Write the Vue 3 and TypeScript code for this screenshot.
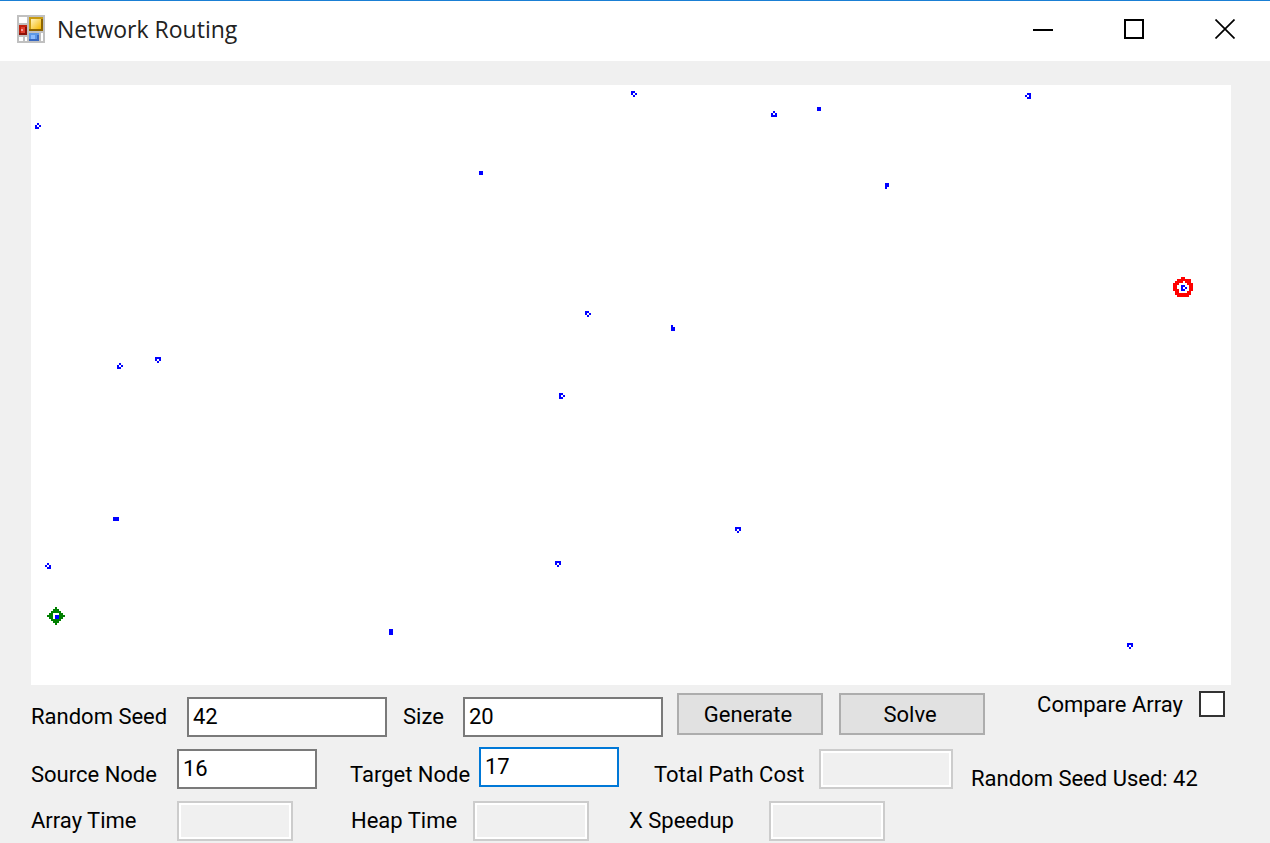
<script setup lang="ts">
import { ref } from 'vue'

interface MapNode {
  x: number
  y: number
  cells: string[]
}

const seed = ref('42')
const size = ref('20')
const source = ref('16')
const target = ref('17')
const compare = ref(false)

const OPEN_E = ['##.', '#.#', '##.']
const OPEN_SE = ['##.', '#.#', '.#.']
const OPEN_S = ['###', '#.#', '.#.']
const OPEN_N = ['.#.', '#.#', '###']
const OPEN_NE = ['.#.', '#.#', '##.']
const OPEN_W = ['.##', '#.#', '.##']
const OPEN_SW = ['.#.', '#.#', '.##']
const DOT = ['##', '##']

// Node positions and cell patterns on the 600 x 300 map grid.
const nodes: MapNode[] = [
  { x: 2, y: 19, cells: OPEN_NE },
  { x: 300, y: 3, cells: OPEN_SE },
  { x: 370, y: 13, cells: OPEN_N },
  { x: 393, y: 11, cells: DOT },
  { x: 497, y: 4, cells: OPEN_W },
  { x: 224, y: 43, cells: DOT },
  { x: 427, y: 49, cells: ['##', '##', '#.'] },
  { x: 575, y: 100, cells: OPEN_E },
  { x: 277, y: 113, cells: OPEN_SE },
  { x: 320, y: 120, cells: ['#.', '##', '##'] },
  { x: 43, y: 139, cells: OPEN_NE },
  { x: 62, y: 136, cells: OPEN_S },
  { x: 264, y: 154, cells: OPEN_E },
  { x: 41, y: 216, cells: ['###', '###'] },
  { x: 352, y: 221, cells: OPEN_S },
  { x: 7, y: 239, cells: OPEN_SW },
  { x: 262, y: 238, cells: OPEN_S },
  { x: 12, y: 265, cells: DOT },
  { x: 179, y: 272, cells: ['##', '##', '##'] },
  { x: 548, y: 279, cells: OPEN_S },
]

const TARGET_RING = [
  '....##....',
  '..#######.',
  '.####.###.',
  '###....###',
  '##......##',
  '##......##',
  '###.....##',
  '.##....##.',
  '.########.',
  '..######..',
]

const SOURCE_RING = [
  '....#....',
  '...###...',
  '..#####..',
  '.##...##.',
  '###...###',
  '.##...##.',
  '..#####..',
  '...###...',
  '....#....',
]

function toPath(cells: string[], x: number, y: number): string {
  return cells
    .flatMap((row, r) =>
      [...row].map((c, i) => (c === '#' ? `M${x + i} ${y + r}h1v1h-1z` : '')),
    )
    .join('')
}
</script>

<template>
  <main class="window">
    <header class="titlebar">
      <svg class="app-icon" viewBox="0 0 28 28" shape-rendering="crispEdges" aria-hidden="true">
        <defs>
          <linearGradient id="gold" x1="0" y1="0" x2="1" y2="1">
            <stop offset="0" stop-color="#fff3c0" />
            <stop offset="1" stop-color="#f5b800" />
          </linearGradient>
        </defs>
        <rect width="28" height="28" fill="#c0c0c0" />
        <path fill="#fff" d="M2 2h8v6H2zM2 22h4v4H2zM8 22h2v4H8zM24 18h2v8h-2z" />
        <rect x="12" y="2" width="14" height="14" fill="#c89a10" />
        <path d="M12 14h14v2H12zM24 4h2v12h-2z" fill="#8e6500" />
        <rect x="14" y="4" width="10" height="10" fill="url(#gold)" />
        <rect x="2" y="10" width="8" height="10" fill="#c0200c" />
        <path d="M2 18h8v2H2zM8 12h2v8H8z" fill="#8c1008" />
        <rect x="4" y="12" width="4" height="6" fill="#e04030" />
        <rect x="4" y="14" width="2" height="2" fill="#f4a0a0" />
        <rect x="12" y="18" width="10" height="8" fill="#5b98e8" />
        <path d="M12 24h10v2H12zM20 20h2v6h-2z" fill="#3868c0" />
        <rect x="14" y="20" width="4" height="4" fill="#8cbcff" />
      </svg>
      <h1>Network Routing</h1>
      <nav class="captions">
        <button type="button" aria-label="Minimize">
          <svg viewBox="0 0 20 20" shape-rendering="crispEdges"><path d="M0 10h20v2H0z" /></svg>
        </button>
        <button type="button" aria-label="Maximize">
          <svg viewBox="0 0 20 20" shape-rendering="crispEdges">
            <path d="M1 1h18v18H1z" fill="none" stroke="#000" stroke-width="2" />
          </svg>
        </button>
        <button type="button" aria-label="Close">
          <svg viewBox="0 0 20 20">
            <path d="M0.5 0.5l19 19M19.5 0.5l-19 19" fill="none" stroke="#000" stroke-width="1.7" />
          </svg>
        </button>
      </nav>
    </header>

    <section class="body">
      <svg class="map" viewBox="0 0 600 300" shape-rendering="crispEdges" role="img" aria-label="Network nodes">
        <path :d="toPath(TARGET_RING, 571, 96)" fill="#f00" />
        <path :d="toPath(SOURCE_RING, 8, 261)" fill="#008000" />
        <path v-for="(n, i) in nodes" :key="i" :d="toPath(n.cells, n.x, n.y)" fill="#00f" />
      </svg>

      <form class="controls" @submit.prevent>
        <div class="row first">
          <label class="l-seed" for="seed">Random Seed</label>
          <input id="seed" v-model="seed" class="field wide" type="text" />
          <label class="l-size" for="size">Size</label>
          <input id="size" v-model="size" class="field wide" type="text" />
          <button class="push gen" type="button">Generate</button>
          <button class="push" type="button">Solve</button>
          <label class="check">Compare Array<input v-model="compare" type="checkbox" /></label>
        </div>
        <div class="row second">
          <label class="l-node" for="source">Source Node</label>
          <input id="source" v-model="source" class="field mid" type="text" />
          <label class="l-target" for="target">Target Node</label>
          <input id="target" v-model="target" class="field mid active" type="text" />
          <label class="l-cost" for="cost">Total Path Cost</label>
          <input id="cost" class="field cost" type="text" disabled />
          <span class="used">Random Seed Used: 42</span>
        </div>
        <div class="row third">
          <label class="l-node" for="array">Array Time</label>
          <input id="array" class="field small" type="text" disabled />
          <label class="l-heap" for="heap">Heap Time</label>
          <input id="heap" class="field small" type="text" disabled />
          <label class="l-speed" for="speed">X Speedup</label>
          <input id="speed" class="field small" type="text" disabled />
        </div>
      </form>
    </section>
  </main>
</template>

<style>
body {
  background: #f0f0f0;
}
</style>

<style scoped>
.window {
  border-top: 1px solid #1a7fd4;
  background: #f0f0f0;
  color: #000;
  font-family: Roboto, "Liberation Sans", sans-serif;
  font-size: 22px;
  line-height: 28px;
  overflow: hidden;
}
* {
  box-sizing: border-box;
}
.titlebar {
  display: flex;
  align-items: center;
  height: 60px;
  padding: 0 0 4px 17px;
  background: #fff;
}
.app-icon {
  width: 28px;
  height: 28px;
  margin-right: 12px;
}
h1 {
  flex: 1;
  margin: 0;
  font-family: "Open Sans", "Noto Sans", sans-serif;
  font-size: 23px;
  line-height: 32px;
  font-weight: 400;
  color: #222;
}
.captions {
  display: flex;
}
.captions button {
  display: grid;
  place-items: center;
  width: 91px;
  height: 56px;
  padding: 0;
  border: 0;
  background: none;
}
.captions svg {
  width: 20px;
  height: 20px;
}
.body {
  padding: 24px 39px 0 31px;
}
.map {
  display: block;
  width: 100%;
  background: #fff;
}
.row {
  display: flex;
  align-items: flex-start;
  white-space: nowrap;
}
.first {
  height: 62px;
  padding-top: 8px;
}
.second {
  height: 52px;
}
.third {
  height: 42px;
}
label,
.used {
  flex: none;
}
.first > label {
  margin-top: 10px;
}
.second > label {
  margin-top: 14px;
}
.third > label {
  margin-top: 8px;
}
.l-seed {
  width: 156px;
}
.l-size {
  width: 60px;
  margin-left: 16px;
}
.l-node {
  width: 146px;
}
.l-target {
  width: 129px;
  margin-left: 33px;
}
.l-cost {
  width: 165px;
  margin-left: 35px;
}
.l-heap {
  width: 122px;
  margin-left: 58px;
}
.l-speed {
  width: 140px;
  margin-left: 40px;
}
.field {
  flex: none;
  height: 40px;
  margin: 0;
  padding: 0 4px 2px;
  border: 2px solid #7a7a7a;
  border-radius: 0;
  outline: 0;
  background: #fff;
  color: #000;
  font: inherit;
}
.first .field {
  margin-top: 4px;
}
.second .field,
.third .field {
  margin-top: 2px;
}
.second .active {
  margin-top: 0;
  border-color: #0078d7;
}
.field:disabled {
  border-color: #ccc;
  background: #f0f0f0;
  box-shadow: inset 0 0 0 2px #fff;
}
.wide {
  width: 200px;
}
.mid {
  width: 140px;
}
.cost {
  width: 134px;
}
.small {
  width: 116px;
}
.push {
  flex: none;
  width: 146px;
  height: 42px;
  margin: 0;
  padding: 2px 4px 0 0;
  border: 2px solid #adadad;
  background: #e1e1e1;
  color: #000;
  font: inherit;
}
.gen {
  margin: 0 16px 0 14px;
}
.first > .check {
  display: flex;
  gap: 16px;
  margin: -2px 6px 0 auto;
}
.check input {
  appearance: none;
  width: 26px;
  height: 26px;
  margin: 0;
  border: 2px solid #333;
  background: #fff;
}
.check input:checked {
  background: #333;
  box-shadow: inset 0 0 0 4px #fff;
}
.used {
  margin: 18px 0 0 18px;
}
</style>
